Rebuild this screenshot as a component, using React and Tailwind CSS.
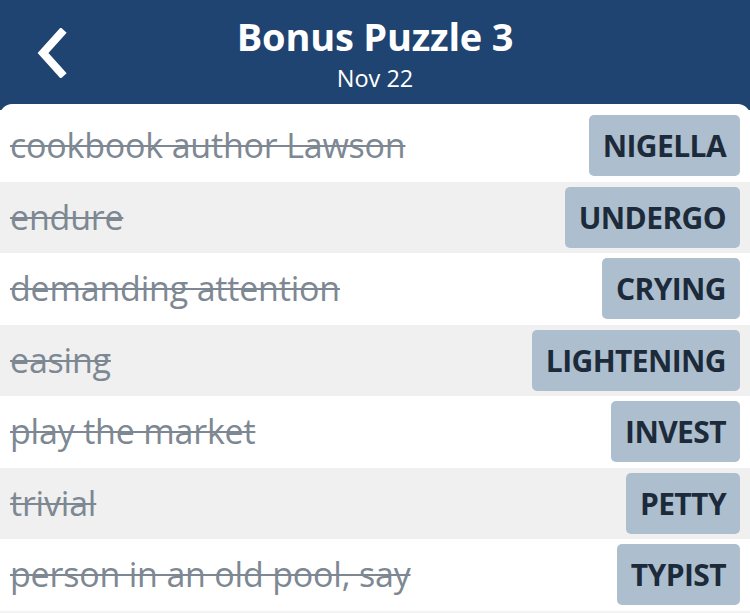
const clues = [
  { clue: 'cookbook author Lawson', answer: 'NIGELLA' },
  { clue: 'endure', answer: 'UNDERGO' },
  { clue: 'demanding attention', answer: 'CRYING' },
  { clue: 'easing', answer: 'LIGHTENING' },
  { clue: 'play the market', answer: 'INVEST' },
  { clue: 'trivial', answer: 'PETTY' },
  { clue: 'person in an old pool, say', answer: 'TYPIST' },
];

export default function App() {
  return (
    <div
      className="w-[750px] h-[613px] overflow-hidden bg-[#1f4471]"
      style={{ fontFamily: '"Open Sans", "Noto Sans", sans-serif' }}
    >
      {/* header */}
      <div className="relative h-[104px] flex flex-col items-center text-white">
        <button className="absolute left-[33px] top-[28px] w-[36px] h-[50px]" aria-label="back">
          <svg viewBox="0 0 36 50" className="w-full h-full">
            <path d="M28 5 L10 25 L28 45" fill="none" stroke="white" strokeWidth="8" strokeLinecap="square" />
          </svg>
        </button>
        <h1 className="mt-[11px] text-[38px] font-bold leading-[50px] tracking-[-0.2px]">Bonus Puzzle 3</h1>
        <p className="mt-[2px] text-[23.5px] leading-[30px]">Nov 22</p>
      </div>

      {/* clue list */}
      <div className="bg-white rounded-t-[12px] pt-[6px]">
        {clues.map((c, i) => (
          <div
            key={c.answer}
            className={`h-[71.5px] flex items-center justify-between pl-[10px] pr-[10px] ${i % 2 === 1 ? 'bg-[#f0f0f0]' : 'bg-white'}`}
          >
            <span className="text-[34px] text-[#7d8893] line-through decoration-[2px] whitespace-nowrap tracking-[-0.2px]">
              {c.clue}
            </span>
            <span className="h-[61px] flex items-center px-[14px] rounded-[5px] bg-[#adbfce] text-[#1c2a3a] text-[30px] font-bold tracking-[-0.6px]">
              {c.answer}
            </span>
          </div>
        ))}
        <div className="h-[20px] bg-[#f3f3f3]" />
      </div>
    </div>
  );
}
